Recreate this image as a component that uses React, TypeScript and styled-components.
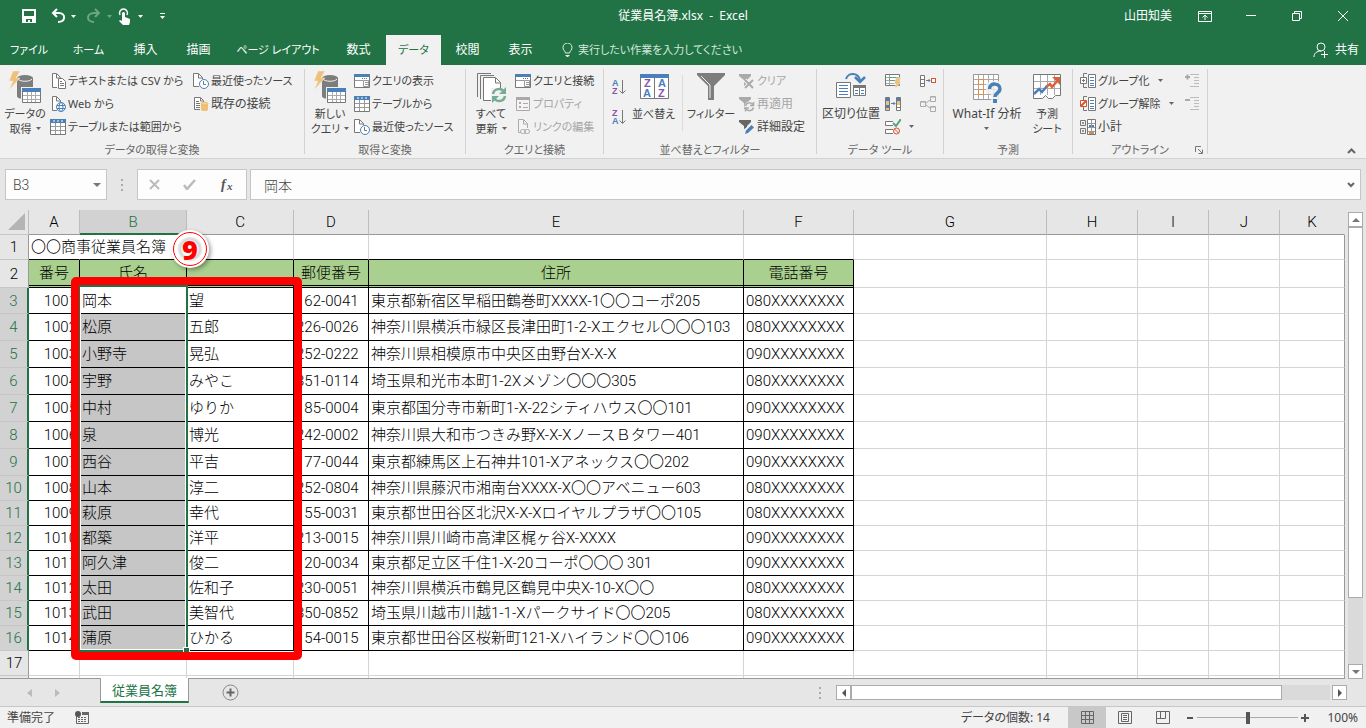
import React from "react";
import styled, { createGlobalStyle, css } from "styled-components";

const GREEN = "#217346";
const UI = `"Noto Sans", "Noto Sans CJK JP", sans-serif`;
const SHEET = `Roboto, "Noto Sans CJK JP", sans-serif`;

const Global = createGlobalStyle`
  * { box-sizing: border-box; }
  body { margin: 0; background: #e6e6e6; }
  button, input { font: inherit; color: inherit; }
  button { border: 0; padding: 0; background: none; cursor: default; white-space: nowrap; }
  svg { display: block; flex: none; }
`;

const Page = styled.div`
  display: flex;
  flex-direction: column;
  height: 100vh;
  overflow: hidden;
  font: 12px/16px ${UI};
  font-feature-settings: "palt";
  color: #444;
`;

/* ---------- title bar ---------- */
const TitleBar = styled.header`
  display: grid;
  grid-template-columns: 1fr auto 1fr;
  align-items: center;
  height: 32px;
  background: ${GREEN};
  color: #fff;
`;
const QuickAccess = styled.div`
  display: flex;
  align-items: center;
  padding-left: 22px;
`;
const QuickButton = styled.button<{ $gap?: number; $dim?: boolean }>`
  margin-right: ${(p) => p.$gap ?? 6}px;
  opacity: ${(p) => (p.$dim ? 0.35 : 1)};
`;
const Title = styled.h1`
  margin: 0;
  font-size: 12px;
  font-weight: 400;
  line-height: 16px;
  white-space: pre;
`;
const WindowTools = styled.div`
  display: flex;
  align-items: center;
  justify-content: flex-end;
`;
const UserName = styled.span`
  margin-right: 10px;
`;
const WindowButton = styled.button`
  display: flex;
  align-items: center;
  justify-content: center;
  width: 46px;
  height: 32px;
`;

/* ---------- tabs ---------- */
const TabBar = styled.nav`
  display: flex;
  align-items: flex-end;
  height: 33px;
  background: ${GREEN};
  color: #fff;
`;
const RibbonTab = styled.button<{ $w: number; $kana?: boolean; $active?: boolean }>`
  width: ${(p) => p.$w}px;
  height: 30px;
  font-size: ${(p) => (p.$kana ? 11 : 12)}px;
  ${(p) =>
    p.$active &&
    css`
      background: #f1f1f1;
      color: ${GREEN};
    `}
`;
const TellMe = styled.label`
  display: flex;
  align-items: center;
  gap: 5px;
  flex: 1;
  height: 30px;
  padding-left: 15px;
  font-size: 11px;
`;
const TellInput = styled.input`
  width: 200px;
  border: 0;
  padding: 0;
  background: none;
  outline: 0;
  &::placeholder { color: #d5e6dc; opacity: 1; }
`;
const Share = styled.button`
  display: flex;
  align-items: center;
  gap: 6px;
  height: 30px;
  padding-right: 7px;
`;

/* ---------- ribbon ---------- */
const Ribbon = styled.section`
  display: flex;
  height: 94px;
  padding: 4px 0;
  background: #f1f1f1;
  border-bottom: 1px solid #d2d2d2;
  font-size: 11px;
`;
const Group = styled.div<{ $w: number }>`
  position: relative;
  width: ${(p) => p.$w}px;
  height: 85px;
  border-right: 1px solid #d2d2d2;
`;
const GroupBody = styled.div<{ $pad?: number }>`
  display: flex;
  height: 69px;
  padding-left: ${(p) => p.$pad ?? 5}px;
`;
const GroupLabel = styled.div`
  height: 16px;
  line-height: 24px;
  text-align: center;
  color: #666;
`;
const Launcher = styled.button`
  position: absolute;
  right: 4px;
  bottom: 0;
`;
const Large = styled.button<{ $w: number; $roomy?: boolean }>`
  display: flex;
  flex-direction: column;
  align-items: center;
  gap: 3px;
  width: ${(p) => p.$w}px;
  height: 69px;
  padding-top: 2px;
  line-height: 15px;
  font-size: ${(p) => (p.$roomy ? 12 : 11)}px;
`;
const Line = styled.span`
  display: flex;
  align-items: center;
  justify-content: center;
  gap: 4px;
  height: 15px;
`;
const LargeText = styled.span`
  display: block;
`;
const Stack = styled.div<{ $w?: number; $ml?: number }>`
  display: flex;
  flex-direction: column;
  width: ${(p) => (p.$w ? p.$w + "px" : "auto")};
  margin-left: ${(p) => p.$ml ?? 0}px;
`;
const Small = styled.button<{ $disabled?: boolean; $roomy?: boolean }>`
  display: flex;
  align-items: center;
  gap: 2px;
  height: 23px;
  font-size: ${(p) => (p.$roomy ? 12 : 11)}px;
  color: ${(p) => (p.$disabled ? "#a6a6a6" : "#444")};
`;
const ArrowSlot = styled.span`
  margin-left: 6px;
`;
const Divider = styled.span`
  width: 1px;
  height: 56px;
  margin: 6px 5px 0 8px;
  background: #dcdcdc;
`;
const SortStack = styled.div`
  display: flex;
  flex-direction: column;
  gap: 10px;
  width: 22px;
  padding-top: 8px;
`;
const CollapseSlot = styled.div`
  display: flex;
  flex: 1;
  align-items: flex-end;
  justify-content: flex-end;
  padding-right: 10px;
`;

/* ---------- formula bar ---------- */
const FormulaRow = styled.div`
  display: flex;
  height: 51px;
  padding: 10px 5px;
  font: 300 14px/20px ${SHEET};
  font-feature-settings: normal;
`;
const Box = styled.div<{ $w?: number; $ml?: number }>`
  display: flex;
  align-items: center;
  justify-content: space-around;
  flex: ${(p) => (p.$w ? `0 0 ${p.$w}px` : "1")};
  min-width: 0;
  margin-left: ${(p) => p.$ml ?? 0}px;
  height: 31px;
  border: 1px solid #c6c6c6;
  background: #fdfdfd;
`;
const BoxInput = styled.input<{ $pad: number }>`
  flex: 1;
  width: 0;
  min-width: 0;
  height: 29px;
  border: 0;
  outline: 0;
  background: none;
  padding: 0 0 0 ${(p) => p.$pad}px;
`;
const BoxButton = styled.button`
  padding: 0 5px;
`;
const Dots = styled.div`
  display: flex;
  flex: 0 0 30px;
  align-items: center;
  justify-content: center;
`;

/* ---------- sheet ---------- */
const SheetRow = styled.main`
  display: flex;
  flex: 1;
  min-height: 0;
`;
const Pane = styled.div`
  position: relative;
  flex: 1;
  min-width: 0;
  overflow: hidden;
  border-bottom: 1px solid #999;
`;
const Grid = styled.table`
  width: 100%;
  table-layout: fixed;
  border-spacing: 0;
  background: #fff;
  font: 300 15px/20px ${SHEET};
  font-feature-settings: normal;
  color: #000;
`;
const HeadRow = styled.tr`
  height: 25px;
`;
const ColHead = styled.th<{ $on?: boolean }>`
  padding: 0;
  font-weight: 300;
  border-right: 1px solid #bdbdbd;
  border-bottom: 1px solid #999;
  background: #e6e6e6;
  ${(p) =>
    p.$on &&
    css`
      background: #d2d2d2;
      color: ${GREEN};
      border-bottom: 2px solid ${GREEN};
    `}
  &:last-child { border-right-color: transparent; }
`;
const Corner = styled.th`
  padding: 0 3px 2px 0;
  border-right: 1px solid #bdbdbd;
  border-bottom: 1px solid #c6c6c6;
  background: #e6e6e6;
  svg { margin-left: auto; }
`;
const Row = styled.tr<{ $h: number }>`
  height: ${(p) => p.$h}px;
`;
const RowHead = styled.th<{ $on?: boolean }>`
  padding: 0;
  font-weight: 300;
  border-right: 1px solid #999;
  border-bottom: 1px solid #c6c6c6;
  background: #e6e6e6;
  ${(p) =>
    p.$on &&
    css`
      background: #d2d2d2;
      color: ${GREEN};
      border-right: 2px solid ${GREEN};
    `}
`;
type CellKind = "plain" | "title" | "top" | "head" | "data" | "picked";
const Cell = styled.td<{ $kind?: CellKind; $align?: string }>`
  padding: 0 2px;
  white-space: nowrap;
  text-align: ${(p) => p.$align ?? "left"};
  border-right: 1px solid #d4d4d4;
  border-bottom: 1px solid #d4d4d4;
  ${(p) =>
    (p.$kind === "top" || p.$kind === "title") &&
    css`
      border-bottom-color: #000;
    `}
  ${(p) =>
    p.$kind === "title" &&
    css`
      border-right-color: transparent;
    `}
  ${(p) =>
    p.$kind === "head" &&
    css`
      background: #a9d08e;
      border-right-color: #000;
      border-bottom: 3px double #000;
    `}
  ${(p) =>
    (p.$kind === "data" || p.$kind === "picked") &&
    css`
      border-right-color: #000;
      border-bottom-color: #000;
    `}
  ${(p) =>
    p.$kind === "picked" &&
    css`
      background: #c6c6c6;
    `}
  &:last-child { border-right-color: #999; }
`;
/* Outline of the selected range B3:B16 with its fill handle */
const Selection = styled.div`
  position: absolute;
  left: 78px;
  top: 75px;
  width: 110px;
  height: 367px;
  border: 2px solid ${GREEN};
  box-shadow: inset 0 0 0 1px #fff;
  &::after {
    content: "";
    position: absolute;
    right: -3px;
    bottom: -3px;
    width: 5px;
    height: 5px;
    background: ${GREEN};
    outline: 1px solid #fff;
  }
`;
const Callout = styled.div`
  position: absolute;
  left: 71px;
  top: 67px;
  width: 231px;
  height: 383px;
  border: 8px solid #f00;
  border-radius: 5px;
`;
const Badge = styled.div`
  position: absolute;
  left: 171px;
  top: 20px;
  width: 38px;
  height: 38px;
  padding: 2px;
  border-radius: 50%;
  background: #fff;
  box-shadow: 2px 2px 4px rgba(0, 0, 0, 0.35);
`;
const BadgeRing = styled.div`
  display: flex;
  align-items: center;
  justify-content: center;
  width: 34px;
  height: 34px;
  border: 1px solid #f00;
  border-radius: 50%;
  background: radial-gradient(circle, #fff 7px, #d4d4d4 10px, #fff 13px);
  font: 900 27px/27px "Noto Sans", sans-serif;
  color: #f00;
`;

const VScroll = styled.div`
  display: flex;
  flex-direction: column;
  flex: 0 0 21px;
  padding: 2px 3px 0;
`;
const ScrollButton = styled.button`
  display: flex;
  align-items: center;
  justify-content: center;
  flex: 0 0 15px;
  width: 15px;
  height: 15px;
  border: 1px solid #ababab;
  background: #fff;
`;
const VTrack = styled.div`
  flex: 1;
  background: #dadada;
`;
const VThumb = styled.div`
  height: 85%;
  border: 1px solid #ababab;
  background: #fff;
`;

/* ---------- sheet tabs ---------- */
const SheetTabs = styled.div`
  display: flex;
  align-items: center;
  height: 27px;
  font-size: 13px;
`;
const NavArrows = styled.div`
  display: flex;
  gap: 23px;
  width: 100px;
  padding-left: 27px;
`;
const SheetTab = styled.button`
  align-self: flex-start;
  width: 89px;
  height: 25px;
  margin-top: -1px;
  position: relative;
  border: 1px solid #999;
  border-width: 0 1px;
  border-bottom: 2px solid ${GREEN};
  background: #fff;
  color: ${GREEN};
`;
const AddSheet = styled.button`
  margin-left: 33px;
`;
const ScrollArea = styled.div`
  display: flex;
  align-items: center;
  gap: 15px;
  margin-left: auto;
`;
const HScroll = styled.div`
  display: flex;
  width: 511px;
  margin-right: 19px;
`;
const HTrack = styled.div`
  flex: 1;
  height: 15px;
  margin-right: 2px;
  background: #dadada;
`;
const HThumb = styled.div`
  width: 90%;
  height: 15px;
  border: 1px solid #ababab;
  background: #fff;
`;

/* ---------- status bar ---------- */
const StatusBar = styled.footer`
  display: flex;
  align-items: center;
  height: 22px;
  border-top: 1px solid #c6c6c6;
  background: #f1f1f1;
`;
const StatusText = styled.span`
  padding-left: 7px;
  margin-right: 20px;
`;
const Count = styled.span`
  margin: 0 18px 0 auto;
`;
const ViewButton = styled.button<{ $on?: boolean }>`
  display: flex;
  align-items: center;
  justify-content: center;
  width: 38px;
  height: 21px;
  background: ${(p) => (p.$on ? "#c8c8c8" : "none")};
`;
const Zoom = styled.div`
  display: flex;
  align-items: center;
  margin-left: 4px;
`;
const Range = styled.input`
  appearance: none;
  width: 101px;
  height: 13px;
  margin: 0 3px;
  background: linear-gradient(#aaa, #aaa) center / 100% 1px no-repeat;
  &::-webkit-slider-thumb {
    appearance: none;
    width: 4px;
    height: 12px;
    background: #555;
  }
`;
const ZoomValue = styled.span`
  width: 57px;
  padding-right: 8px;
  text-align: right;
`;

/* ---------- icons ---------- */
const BLUE = "#4a80ba";
const GRAY = "#777";

type Kids = { children?: React.ReactNode; w?: number; h?: number };
const Svg = ({ w = 16, h = 16, children }: Kids) => (
  <svg width={w} height={h} viewBox={`0 0 ${w} ${h}`} fill="none" aria-hidden="true">
    {children}
  </svg>
);
const Down = ({ c = "#666" }: { c?: string }) => (
  <Svg w={5} h={3}>
    <path d="M0 0h5L2.500 3z" fill={c} />
  </Svg>
);

const DatabaseIcon = () => (
  <Svg w={32} h={32}>
    <path d="M8 7v18c0 2 3 3 8 3s8-1 8-3V7z" fill="#7d7d7d" />
    <ellipse cx="16" cy="7" rx="8" ry="3" fill="#7d7d7d" />
    <path d="M9 8c2 3 12 3 14 0" stroke="#f1f1f1" />
    <path d="M4 0h7L7 7h4L0 19l4-9H0z" fill="#eec078" stroke="#f1f1f1" strokeWidth=".5" />
    <path d="M12 16h20v16H12z" fill="#f1f1f1" />
    <path d="M13.500 17.500h18v14h-18z" fill="#fff" stroke={GRAY} />
    <path d="M14 24.500h17M14 28.500h17M18.500 21v10M22.500 21v10M26.500 21v10" stroke="#aaa" />
    <path d="M13 17h19v4H13z" fill={BLUE} />
  </Svg>
);
const Sheetlet = ({ c = GRAY }: { c?: string }) => (
  <path d="M10.500 8V4.500l-4-4h-4v14H7M6.500 1v4h4" stroke={c} fill="none" />
);
const TextFileIcon = () => (
  <Svg>
    <path d="M3 1h4l4 4v9H3z" fill="#fff" />
    <Sheetlet />
    <path d="M8.500 5.500h4l3 3v7h-7z" fill="#fff" stroke={GRAY} />
    <path d="M10 8.500h2M10 10.500h4M10 12.500h4" stroke={GRAY} />
  </Svg>
);
const WebIcon = () => (
  <Svg>
    <path d="M3 1h4l4 4v9H3z" fill="#fff" />
    <Sheetlet />
    <circle cx="11" cy="11" r="4.500" fill="#fff" stroke={BLUE} />
    <ellipse cx="11" cy="11" rx="2" ry="4.500" stroke={BLUE} />
    <path d="M7 9.500h8M7 12.500h8" stroke={BLUE} />
  </Svg>
);
const RecentIcon = () => (
  <Svg>
    <path d="M1 1h4l4 4v8H1z" fill="#fff" />
    <path d="M9.500 6V4.500l-4-4h-5v13H6M5.500 1v4h4" stroke={GRAY} />
    <circle cx="11" cy="11" r="4.500" fill="#fff" stroke={BLUE} />
    <path d="M10.500 8v3.500H13" stroke={GRAY} />
  </Svg>
);
const TableIcon = () => (
  <Svg>
    <path d="M.5.500h15v15H.5z" fill="#fff" stroke={GRAY} />
    <path d="M1 7.500h14M1 11.500h14M5.500 4v11M10.500 4v11" stroke="#999" />
    <path d="M0 0h16v4H0z" fill={BLUE} />
    <path d="M3 2h2M7 2h2M11 2h2" stroke="#fff" />
  </Svg>
);
const ExistingIcon = () => (
  <Svg>
    <path d="M1.500 1.500h6l3 3v9h-9z" fill="#fff" stroke={GRAY} />
    <path d="M7.500 2v3h3M3 5.500h3M3 7.500h5M3 9.500h4M3 11.500h4" stroke={GRAY} />
    <path d="M7 6h9v9H7z" fill="#f1f1f1" />
    <path d="M8 7.500v6c0 2 7 2 7 0v-6z" fill="#eec078" />
    <ellipse cx="11.500" cy="7.500" rx="3.500" ry="1.500" fill="#f4d298" stroke="#e0a850" strokeWidth=".5" />
  </Svg>
);
const QueryPaneIcon = () => (
  <Svg>
    <path d="M.5 1.500h15v13H.5z" fill="#fff" stroke={GRAY} />
    <path d="M0 1h16v3H0z" fill={BLUE} />
    <path d="M1 7.500h8M9.500 7.500v6h5v-6z" stroke="#999" />
    <path d="M11 9.500h3M11 11.500h3" stroke="#999" />
    <path d="M8 5.500h1M10 5.500h1M12 5.500h1" stroke="#777" />
  </Svg>
);
const PropertiesIcon = () => (
  <Svg>
    <path d="M1.500 1.500h13v13h-13z" fill="#f6f2f6" stroke="#aaa" />
    <path d="M1 1h14v3H1z" fill="#aaa" />
    <path d="M4 6h2v2H4zM4 10h2v2H4z" fill="#aaa" />
    <path d="M8 7.500h5M8 11.500h5" stroke="#aaa" />
  </Svg>
);
const LinkFileIcon = () => (
  <Svg>
    <path d="M12.500 9V4.500l-4-4h-5v13H6M8.500 1v4h4" stroke="#aaa" fill="#f6f2f6" />
    <rect x="5.500" y="10.500" width="5" height="4" rx="2" stroke="#aaa" fill="#f1f1f1" />
    <rect x="9.500" y="10.500" width="5" height="4" rx="2" stroke="#aaa" />
  </Svg>
);
const RefreshAllIcon = () => (
  <Svg w={32} h={32}>
    <path d="M2.500 26V2.500H16M5.500 28V4.500H19" stroke={GRAY} />
    <path d="M8.500 6.500h12l5 5v18h-17z" fill="#fff" stroke={GRAY} />
    <path d="M20.500 7v5h5" stroke={GRAY} />
    <path d="M16 17h16v14H16z" fill="#f1f1f1" />
    <path d="M18 23c1-6 8-6 10.500-3M30 25c-1 6-8 6-10.500 3" stroke="#74ad93" strokeWidth="2.500" />
    <path d="M31 16v7h-7zM17 32v-7h7z" fill="#74ad93" />
  </Svg>
);
const Letter = ({ x, y, c, s = 9, t }: { x: number; y: number; c: string; s?: number; t: string }) => (
  <text x={x} y={y} fill={c} fontFamily="Liberation Sans, sans-serif" fontSize={s} fontWeight="700">
    {t}
  </text>
);
const PURPLE = "#8a52b0";
const SortIcon = ({ asc }: { asc?: boolean }) => (
  <Svg w={16} h={20}>
    <Letter x={1} y={9} c={asc ? BLUE : PURPLE} t={asc ? "A" : "Z"} />
    <Letter x={1} y={17} c={asc ? PURPLE : BLUE} t={asc ? "Z" : "A"} />
    <path d="M11.500 3v13M8.500 13.500l3 3 3-3" stroke={GRAY} />
  </Svg>
);
const SortDialogIcon = () => (
  <Svg w={32} h={32}>
    <path d="M2.500 3.500h28v24h-28z" fill="#fff" stroke={GRAY} />
    <path d="M16.500 7v20" stroke={GRAY} />
    <path d="M2 3h29v4H2z" fill={BLUE} />
    <Letter x={6} y={16} c={PURPLE} s={11} t="Z" />
    <Letter x={5} y={26} c={BLUE} s={11} t="A" />
    <Letter x={20} y={16} c={BLUE} s={11} t="A" />
    <Letter x={20} y={26} c={PURPLE} s={11} t="Z" />
  </Svg>
);
const FilterIcon = () => (
  <Svg w={32} h={32}>
    <path d="M2 2h28v2L19 15v14h-6V15L2 4z" fill="#7d7d7d" />
    <path d="M6 5l9 9v13" stroke="#f1f1f1" />
  </Svg>
);
const SmallFunnel = ({ c }: { c: string }) => <path d="M0 1h12v2L8 7v6H5V7L0 3z" fill={c} />;
const ClearIcon = () => (
  <Svg>
    <SmallFunnel c="#aaa" />
    <path d="M6 7l8 8M14 7l-8 8" stroke="#f1f1f1" strokeWidth="4" />
    <path d="M6 7l8 8M14 7l-8 8" stroke="#aaa" strokeWidth="2" />
  </Svg>
);
const ReapplyIcon = () => (
  <Svg>
    <SmallFunnel c="#aaa" />
    <circle cx="10.500" cy="10.500" r="5" fill="#f1f1f1" />
    <path d="M6.500 10c1-4 6-4 7.500-1M14.500 11.500c-1 4-6 4-7.500 1M14.500 6v3.500H11M6.500 15.500V12H10" stroke="#aaa" strokeWidth="1.500" />
  </Svg>
);
const AdvancedIcon = () => (
  <Svg>
    <SmallFunnel c="#666" />
    <path d="M13 4l4 4-8 8H4v-5z" fill="#f1f1f1" />
    <path d="M12.500 6l2.500 2.500-6 5.500-3 1 1-3.500z" fill={BLUE} />
  </Svg>
);
const SplitIcon = () => (
  <Svg w={32} h={32}>
    <path d="M1.500 11.500h14v15h-14z" fill="#fff" stroke={GRAY} />
    <path d="M4 14.500h9M4 17.500h9M4 20.500h9M4 23.500h9" stroke={BLUE} />
    <path d="M18.500 14.500h12v10h-12z" fill="#fff" stroke={GRAY} />
    <path d="M18 14h13v3H18zM24 17h1v7h-1z" fill={GRAY} />
    <path d="M20 19.500h3M20 22.500h3M26 19.500h3M26 22.500h3" stroke={BLUE} />
    <path d="M11 8c2-7 13-7 14 2" stroke={BLUE} strokeWidth="2" />
    <path d="M20 6l5 5 5-5" stroke={BLUE} strokeWidth="2.500" />
  </Svg>
);
const FlashFillIcon = () => (
  <Svg>
    <path d="M.5 1.500h14v11H.5z" fill="#fff" stroke={GRAY} />
    <path d="M1 4.500h14M1 7.500h14M1 10.500h14M4.500 2v10" stroke="#aaa" />
    <path d="M4.500 4.500h7v3h-7z" stroke="#5aa37c" fill="#fff" />
    <path d="M11 5h5l-2 4h2l-6 7 1-5H9z" fill="#eec078" stroke="#f1f1f1" strokeWidth=".5" />
  </Svg>
);
const DuplicatesIcon = () => (
  <Svg>
    <path d="M.5 1.500h4v13h-4z" fill="#eec078" stroke={GRAY} />
    <path d="M1 2h3v3H1zM1 9h3v3H1z" fill={BLUE} />
    <path d="M11.500 1.500h4v13h-4z" fill="#fff" stroke={GRAY} />
    <path d="M12 2h3v3h-3z" fill={BLUE} />
    <path d="M12 5h3v4h-3z" fill="#eec078" />
    <path d="M12 11.500h3" stroke={GRAY} />
    <path d="M6 7.500h4M8.500 6l1.500 1.500L8.500 9" stroke={BLUE} />
  </Svg>
);
const ValidationIcon = () => (
  <Svg>
    <path d="M8 2.500H.5v4H8M8 10.500H.5v4H8" stroke={GRAY} fill="#fff" />
    <path d="M8 4l3 3 5-7" stroke="#5aa37c" strokeWidth="2" />
    <circle cx="11.500" cy="12" r="3" stroke="#d9532c" fill="#f1f1f1" />
    <path d="M9.500 10l4 4" stroke="#d9532c" />
  </Svg>
);
const ConsolidateIcon = () => (
  <Svg>
    <path d="M.5 2.500h4v11h-4zM1 6.500h3M1 10.500h3" fill="#fff" stroke={GRAY} />
    <path d="M6 7.500h4M8.500 6l1.500 1.500L8.500 9" stroke={BLUE} />
    <path d="M11 5h5v5h-5z" fill="#d9532c" />
    <path d="M12 6h3v3h-3z" fill="#fff" />
  </Svg>
);
const RelationIcon = () => (
  <Svg>
    <path d="M.5 5.500h5v5h-5zM10.500.500h5v5h-5zM10.500 10.500h5v5h-5zM6 7l4-3M6 9l4 3" stroke="#aaa" />
    <path d="M1 6h4M11 1h4M11 11h4" stroke="#aaa" />
  </Svg>
);
const WhatIfIcon = () => (
  <Svg w={32} h={32}>
    <path d="M2.500 3.500h25v25h-25z" fill="#fff" stroke="#999" />
    <path d="M3 8.500h24M3 13.500h24M3 18.500h24M3 23.500h24M7.500 4v24M12.500 4v24M17.500 4v24M22.500 4v24" stroke="#aaa" />
    <path d="M7.500 8.500h5v5h-5zM7.500 18.500h5v5h-5z" fill="#fff" stroke="#e08a3c" />
    <path d="M15 13l4-3h11v22H20v-9h-5z" fill="#f1f1f1" opacity=".8" />
    <path d="M18.500 18c0-7 11-6 10.500 0 0 4-5 3.500-5 8" stroke={BLUE} strokeWidth="3.500" />
    <path d="M22 28h4v4h-4z" fill={BLUE} />
  </Svg>
);
const ForecastIcon = () => (
  <Svg w={32} h={32}>
    <path d="M2.500 3.500h27v21h-5l-3 3h-4l-3-3-3 3h-9z" fill="#fff" stroke={GRAY} />
    <path d="M3 10.500h26M3 17.500h26M9.500 4v20M16.500 4v20M23.500 4v20" stroke="#aaa" />
    <path d="M3 23l5-5 3 3 5-6" stroke={BLUE} strokeWidth="2.500" />
    <path d="M15 16l4-3 2 3 7-8" stroke="#d9623c" strokeWidth="2.500" />
    <path d="M21 6h8v8z" fill="#d9623c" />
  </Svg>
);
const GroupIcon = ({ cut }: { cut?: boolean }) => (
  <Svg>
    <path d="M7 .5H3.500V4M3.500 10v4.500H7" stroke={GRAY} />
    <path d="M8.500 1.500h7v13h-7z" fill="#fff" stroke={GRAY} />
    <path d="M10 4.500h4M10 7.500h4M10 10.500h4M10 12.500h4" stroke={BLUE} />
    <path d="M.5 4.500h6v6h-6z" fill="#fff" stroke={cut ? "#d9532c" : GRAY} />
    {cut ? <path d="M1 10l5-5" stroke="#d9532c" strokeWidth="2" /> : <path d="M2 7.500h3M3.500 6v3" stroke={GRAY} />}
  </Svg>
);
const SubtotalIcon = () => (
  <Svg>
    <path d="M.5 1.500h5v5h-5zM.5 9.500h5v5h-5zM2 4h2M3 3v2M2 12h2M3 11v2" stroke={GRAY} />
    <path d="M7.500.500h8v15h-8z" fill="#fff" stroke={GRAY} />
    <path d="M8 4.500h7M8 8.500h7M8 12.500h7M11.500 1v14" stroke="#999" />
    <path d="M9 6h2v2H9zM12 6h2v2h-2z" fill={BLUE} />
    <path d="M9 13h2v2H9zM12 13h2v2h-2z" fill="#e08a3c" />
  </Svg>
);
const DetailIcon = ({ plus }: { plus?: boolean }) => (
  <Svg>
    <path d={plus ? "M1 4h5M3.500 1.500v5" : "M1 4h5"} stroke="#aaa" strokeWidth="2" />
    <path d="M6 1.500h9M10 4.500h5M10 7.500h5M10 10.500h5M6 13.500h9" stroke="#bbb" />
  </Svg>
);

/* ---------- data ---------- */
const columns: [string, number?][] = [
  ["A", 51], ["B", 107], ["C", 107], ["D", 75], ["E", 375], ["F", 110],
  ["G", 193], ["H", 91], ["I", 71], ["J", 71], ["K"],
];
const headings = ["番号", "氏名", "", "郵便番号", "住所", "電話番号"];
const people: string[][] = [
  ["1001", "岡本", "望", "162-0041", "東京都新宿区早稲田鶴巻町XXXX-1〇〇コーポ205", "080XXXXXXXX"],
  ["1002", "松原", "五郎", "226-0026", "神奈川県横浜市緑区長津田町1-2-Xエクセル〇〇〇103", "080XXXXXXXX"],
  ["1003", "小野寺", "晃弘", "252-0222", "神奈川県相模原市中央区由野台X-X-X", "090XXXXXXXX"],
  ["1004", "宇野", "みやこ", "351-0114", "埼玉県和光市本町1-2Xメゾン〇〇〇305", "080XXXXXXXX"],
  ["1005", "中村", "ゆりか", "185-0004", "東京都国分寺市新町1-X-22シティハウス〇〇101", "090XXXXXXXX"],
  ["1006", "泉", "博光", "242-0002", "神奈川県大和市つきみ野X-X-XノースＢタワー401", "090XXXXXXXX"],
  ["1007", "西谷", "平吉", "177-0044", "東京都練馬区上石神井101-Xアネックス〇〇202", "090XXXXXXXX"],
  ["1008", "山本", "淳二", "252-0804", "神奈川県藤沢市湘南台XXXX-X〇〇アベニュー603", "080XXXXXXXX"],
  ["1009", "萩原", "幸代", "155-0031", "東京都世田谷区北沢X-X-Xロイヤルプラザ〇〇105", "080XXXXXXXX"],
  ["1010", "都築", "洋平", "213-0015", "神奈川県川崎市高津区梶ヶ谷X-XXXX", "090XXXXXXXX"],
  ["1011", "阿久津", "俊二", "120-0034", "東京都足立区千住1-X-20コーポ〇〇〇 301", "090XXXXXXXX"],
  ["1012", "太田", "佐和子", "230-0051", "神奈川県横浜市鶴見区鶴見中央X-10-X〇〇", "080XXXXXXXX"],
  ["1013", "武田", "美智代", "350-0852", "埼玉県川越市川越1-1-Xパークサイド〇〇205", "080XXXXXXXX"],
  ["1014", "蒲原", "ひかる", "154-0015", "東京都世田谷区桜新町121-Xハイランド〇〇106", "090XXXXXXXX"],
];
const tabs: { name: string; w: number; kana?: boolean }[] = [
  { name: "ファイル", w: 58, kana: true },
  { name: "ホーム", w: 61, kana: true },
  { name: "挿入", w: 53 },
  { name: "描画", w: 53 },
  { name: "ページ レイアウト", w: 106, kana: true },
  { name: "数式", w: 55 },
  { name: "データ", w: 55, kana: true },
  { name: "校閲", w: 53 },
  { name: "表示", w: 53 },
];
const Blanks = ({ n }: { n: number }) => (
  <>
    {Array.from({ length: n }, (_, i) => (
      <Cell key={i} />
    ))}
  </>
);
const rowHeight = (i: number) => (i === 0 ? 26 : i < 7 ? 27 : 25);

export default function App() {
  return (
    <Page>
      <Global />
      <TitleBar>
        <QuickAccess>
          <QuickButton $gap={14} aria-label="上書き保存">
            <Svg w={14} h={14}>
              <path d="M0 0h14v14H0z" fill="#fff" />
              <path d="M2 2h10v5H2zM4 10h6v3H8v-2H6v2H4z" fill={GREEN} />
            </Svg>
          </QuickButton>
          <QuickButton $gap={5} aria-label="元に戻す">
            <Svg>
              <path d="M7 1L3 5l4 4M3 5h6c7 0 7 9-1 9" stroke="#fff" strokeWidth="2" />
            </Svg>
          </QuickButton>
          <QuickButton $gap={10} aria-label="元に戻す一覧"><Down c="#fff" /></QuickButton>
          <QuickButton $gap={5} $dim aria-label="やり直し">
            <Svg>
              <path d="M9 1l4 4-4 4M13 5H8C0 5 0 14 8 14" stroke="#fff" strokeWidth="2" />
            </Svg>
          </QuickButton>
          <QuickButton $dim aria-label="やり直し一覧"><Down c="#fff" /></QuickButton>
          <QuickButton aria-label="タッチ モード">
            <Svg w={14} h={17}>
              <path d="M2 7a4 4 0 1 1 7 0" stroke="#fff" strokeWidth="1.500" />
              <path d="M4 5q1.500-2 3 0v4l5 2v3l-1 3H5l-4-4 1-1 2 1z" fill="#fff" />
            </Svg>
          </QuickButton>
          <QuickButton $gap={16} aria-label="モードの選択"><Down c="#fff" /></QuickButton>
          <QuickButton aria-label="クイック アクセスのカスタマイズ">
            <Svg w={7} h={6}>
              <path d="M1 .5h5" stroke="#fff" />
              <path d="M1 3h5L3.500 6z" fill="#fff" />
            </Svg>
          </QuickButton>
        </QuickAccess>
        <Title>{"従業員名簿.xlsx  -  Excel"}</Title>
        <WindowTools>
          <UserName>山田知美</UserName>
          <WindowButton aria-label="リボンの表示オプション">
            <Svg w={14} h={11}>
              <path d="M.5.500h13v10H.5zM1 2.500h12M7 9V4.500M4.500 6.500L7 4l2.500 2.500" stroke="#fff" />
            </Svg>
          </WindowButton>
          <WindowButton aria-label="最小化">
            <Svg w={10} h={2}><path d="M0 .5h10" stroke="#fff" /></Svg>
          </WindowButton>
          <WindowButton aria-label="元のサイズに戻す">
            <Svg w={10} h={10}><path d="M.5 2.500h7v7h-7zM2.500 2V.5h7v7H8" stroke="#fff" /></Svg>
          </WindowButton>
          <WindowButton aria-label="閉じる">
            <Svg w={10} h={10}><path d="M0 0l10 10M10 0L0 10" stroke="#fff" /></Svg>
          </WindowButton>
        </WindowTools>
      </TitleBar>

      <TabBar>
        {tabs.map(({ name, w, kana }) => (
          <RibbonTab key={name} $w={w} $kana={kana} $active={name === "データ"}>{name}</RibbonTab>
        ))}
        <TellMe>
          <Svg w={11} h={14}>
            <path d="M3.500 10C3 8 1 7 1 4.500a4.500 4.500 0 0 1 9 0C10 7 8 8 7.500 10zM3.500 12.500h4M4.500 13.500h2" stroke="#e6f0ea" />
          </Svg>
          <TellInput placeholder="実行したい作業を入力してください" aria-label="操作アシスト" />
        </TellMe>
        <Share>
          <Svg>
            <circle cx="8" cy="5" r="4" stroke="#fff" />
            <path d="M1 15c0-4 3-6 7-6M8 12.500h7M11.500 9v7" stroke="#fff" />
          </Svg>
          共有
        </Share>
      </TabBar>

      <Ribbon>
        <Group $w={305}>
          <GroupBody>
            <Large $w={40}>
              <DatabaseIcon />
              <LargeText><Line>データの</Line><Line>取得<Down /></Line></LargeText>
            </Large>
            <Stack $w={143} $ml={5}>
              <Small><TextFileIcon />テキストまたは CSV から</Small>
              <Small><WebIcon />Web から</Small>
              <Small><TableIcon />テーブルまたは範囲から</Small>
            </Stack>
            <Stack>
              <Small><RecentIcon />最近使ったソース</Small>
              <Small $roomy><ExistingIcon />既存の接続</Small>
            </Stack>
          </GroupBody>
          <GroupLabel>データの取得と変換</GroupLabel>
        </Group>

        <Group $w={161}>
          <GroupBody>
            <Large $w={40}>
              <DatabaseIcon />
              <LargeText><Line>新しい</Line><Line>クエリ<Down /></Line></LargeText>
            </Large>
            <Stack $ml={4}>
              <Small><QueryPaneIcon />クエリの表示</Small>
              <Small><TableIcon />テーブルから</Small>
              <Small><RecentIcon />最近使ったソース</Small>
            </Stack>
          </GroupBody>
          <GroupLabel>取得と変換</GroupLabel>
        </Group>

        <Group $w={138}>
          <GroupBody>
            <Large $w={40}>
              <RefreshAllIcon />
              <LargeText><Line>すべて</Line><Line>更新<Down /></Line></LargeText>
            </Large>
            <Stack $ml={4}>
              <Small><QueryPaneIcon />クエリと接続</Small>
              <Small $disabled><PropertiesIcon />プロパティ</Small>
              <Small $disabled><LinkFileIcon />リンクの編集</Small>
            </Stack>
          </GroupBody>
          <GroupLabel>クエリと接続</GroupLabel>
        </Group>

        <Group $w={213}>
          <GroupBody $pad={7}>
            <SortStack>
              <button aria-label="昇順"><SortIcon asc /></button>
              <button aria-label="降順"><SortIcon /></button>
            </SortStack>
            <Large $w={41}>
              <SortDialogIcon />
              <Line>並べ替え</Line>
            </Large>
            <Divider />
            <Large $w={46}>
              <FilterIcon />
              <Line>フィルター</Line>
            </Large>
            <Stack $ml={5}>
              <Small $disabled><ClearIcon />クリア</Small>
              <Small $disabled $roomy><ReapplyIcon />再適用</Small>
              <Small $roomy><AdvancedIcon />詳細設定</Small>
            </Stack>
          </GroupBody>
          <GroupLabel>並べ替えとフィルター</GroupLabel>
        </Group>

        <Group $w={127}>
          <GroupBody>
            <Large $w={58} $roomy>
              <SplitIcon />
              <Line>区切り位置</Line>
            </Large>
            <Stack $ml={5} $w={35}>
              <Small aria-label="フラッシュ フィル"><FlashFillIcon /></Small>
              <Small aria-label="重複の削除"><DuplicatesIcon /></Small>
              <Small aria-label="データの入力規則"><ValidationIcon /><ArrowSlot><Down /></ArrowSlot></Small>
            </Stack>
            <Stack>
              <Small aria-label="統合"><ConsolidateIcon /></Small>
              <Small aria-label="リレーションシップ"><RelationIcon /></Small>
            </Stack>
          </GroupBody>
          <GroupLabel>データ ツール</GroupLabel>
        </Group>

        <Group $w={129}>
          <GroupBody>
            <Large $w={76} $roomy>
              <WhatIfIcon />
              <LargeText><Line>What-If 分析</Line><Line><Down /></Line></LargeText>
            </Large>
            <Large $w={44}>
              <ForecastIcon />
              <LargeText><Line>予測</Line><Line>シート</Line></LargeText>
            </Large>
          </GroupBody>
          <GroupLabel>予測</GroupLabel>
        </Group>

        <Group $w={135}>
          <GroupBody $pad={7}>
            <Stack $w={104}>
              <Small><GroupIcon />グループ化<ArrowSlot><Down /></ArrowSlot></Small>
              <Small><GroupIcon cut />グループ解除<ArrowSlot><Down /></ArrowSlot></Small>
              <Small $roomy><SubtotalIcon />小計</Small>
            </Stack>
            <Stack>
              <Small aria-label="詳細データの表示"><DetailIcon plus /></Small>
              <Small aria-label="詳細を表示しない"><DetailIcon /></Small>
            </Stack>
          </GroupBody>
          <GroupLabel>アウトライン</GroupLabel>
          <Launcher aria-label="アウトラインの設定">
            <Svg w={8} h={8}>
              <path d="M.5 6V.5H6M3 3l4 4M7.500 3.500v4h-4" stroke="#777" />
            </Svg>
          </Launcher>
        </Group>
        <CollapseSlot>
          <button aria-label="リボンを折りたたむ">
            <Svg w={9} h={6}><path d="M1 5l3.500-3.500L8 5" stroke="#666" strokeWidth="2" /></Svg>
          </button>
        </CollapseSlot>
      </Ribbon>

      <FormulaRow>
        <Box $w={102}>
          <BoxInput $pad={7} defaultValue="B3" aria-label="名前ボックス" />
          <BoxButton aria-label="名前の一覧">
            <Svg w={8} h={4}><path d="M0 0h8L4 4z" fill="#777" /></Svg>
          </BoxButton>
        </Box>
        <Dots>
          <Svg w={2} h={12}><path d="M0 1h2M0 6h2M0 11h2" stroke="#aaa" strokeWidth="2" /></Svg>
        </Dots>
        <Box $w={110}>
          <button aria-label="キャンセル">
            <Svg w={11} h={11}><path d="M1 1l9 9M10 1l-9 9" stroke="#bbb" strokeWidth="2" /></Svg>
          </button>
          <button aria-label="入力">
            <Svg w={13} h={11}><path d="M1 6l3 4 8-9" stroke="#bbb" strokeWidth="2.500" /></Svg>
          </button>
          <button aria-label="関数の挿入">
            <Svg w={16} h={18}>
              <text x="2" y="13" fill="#555" fontFamily="Liberation Serif, serif" fontSize="14" fontStyle="italic" fontWeight="700">f</text>
              <text x="8" y="14" fill="#555" fontFamily="Liberation Serif, serif" fontSize="11" fontStyle="italic" fontWeight="700">x</text>
            </Svg>
          </button>
        </Box>
        <Box $ml={3}>
          <BoxInput $pad={13} defaultValue="岡本" aria-label="数式バー" />
          <BoxButton aria-label="数式バーの展開">
            <Svg w={8} h={6}><path d="M1 1l3 3 3-3" stroke="#666" strokeWidth="2" /></Svg>
          </BoxButton>
        </Box>
      </FormulaRow>

      <SheetRow>
        <Pane>
          <Grid>
            <colgroup>
              <col width={29} />
              {columns.map(([c, w]) => <col key={c} width={w} />)}
            </colgroup>
            <thead>
              <HeadRow>
                <Corner>
                  <Svg w={17} h={17}><path d="M17 0v17H0z" fill="#b4b4b4" /></Svg>
                </Corner>
                {columns.map(([c]) => <ColHead key={c} scope="col" $on={c === "B"}>{c}</ColHead>)}
              </HeadRow>
            </thead>
            <tbody>
              <Row $h={25}>
                <RowHead scope="row">1</RowHead>
                <Cell $kind="title">〇〇商事従業員名簿</Cell>
                {headings.slice(1).map((_, i) => <Cell key={i} $kind="top" />)}
                <Blanks n={5} />
              </Row>
              <Row $h={28}>
                <RowHead scope="row">2</RowHead>
                {headings.map((h, i) => <Cell key={i} $kind="head" $align="center">{h}</Cell>)}
                <Blanks n={5} />
              </Row>
              {people.map((p, i) => (
                <Row key={p[0]} $h={rowHeight(i)}>
                  <RowHead scope="row" $on>{i + 3}</RowHead>
                  {p.map((v, j) => (
                    <Cell key={j} $kind={j === 1 && i > 0 ? "picked" : "data"} $align={j === 0 ? "right" : "left"}>{v}</Cell>
                  ))}
                  <Blanks n={5} />
                </Row>
              ))}
              <Row $h={25}>
                <RowHead scope="row">17</RowHead>
                <Blanks n={11} />
              </Row>
              <Row $h={25}>
                <RowHead />
                <Blanks n={11} />
              </Row>
            </tbody>
          </Grid>
          <Selection />
          <Callout />
          <Badge><BadgeRing>9</BadgeRing></Badge>
        </Pane>
        <VScroll>
          <ScrollButton aria-label="上へスクロール">
            <Svg w={8} h={4}><path d="M4 0l4 4H0z" fill="#777" /></Svg>
          </ScrollButton>
          <VTrack><VThumb /></VTrack>
          <ScrollButton aria-label="下へスクロール">
            <Svg w={8} h={4}><path d="M0 0h8L4 4z" fill="#777" /></Svg>
          </ScrollButton>
        </VScroll>
      </SheetRow>

      <SheetTabs>
        <NavArrows>
          <button aria-label="前のシート"><Svg w={5} h={8}><path d="M5 0v8L0 4z" fill="#bbb" /></Svg></button>
          <button aria-label="次のシート"><Svg w={5} h={8}><path d="M0 0v8l5-4z" fill="#bbb" /></Svg></button>
        </NavArrows>
        <SheetTab>従業員名簿</SheetTab>
        <AddSheet aria-label="新しいシート">
          <Svg w={17} h={17}>
            <circle cx="8.500" cy="8.500" r="7.500" stroke="#888" />
            <path d="M8.500 4.500v8M4.500 8.500h8" stroke="#666" strokeWidth="2" />
          </Svg>
        </AddSheet>
        <ScrollArea>
          <Svg w={2} h={12}><path d="M0 1h2M0 6h2M0 11h2" stroke="#aaa" strokeWidth="2" /></Svg>
          <HScroll>
            <ScrollButton aria-label="左へスクロール"><Svg w={4} h={8}><path d="M4 0v8L0 4z" fill="#555" /></Svg></ScrollButton>
            <HTrack><HThumb /></HTrack>
            <ScrollButton aria-label="右へスクロール"><Svg w={4} h={8}><path d="M0 0v8l4-4z" fill="#555" /></Svg></ScrollButton>
          </HScroll>
        </ScrollArea>
      </SheetTabs>

      <StatusBar>
        <StatusText>準備完了</StatusText>
        <button aria-label="マクロの記録">
          <Svg w={14} h={13}>
            <path d="M1.500 5v7.500h12v-11H7" stroke="#666" />
            <path d="M7 1h7v3H7z" fill="#666" />
            <circle cx="3" cy="3" r="3" fill="#555" />
            <path d="M3 6.500h9M3 8.500h9M3 10.500h9" stroke="#666" strokeDasharray="2 1" />
          </Svg>
        </button>
        <Count>データの個数: 14</Count>
        <ViewButton $on aria-label="標準">
          <Svg w={13} h={13}><path d="M.5.500h12v12H.5zM4.500 0v13M8.500 0v13M0 4.500h13M0 8.500h13" stroke="#666" /></Svg>
        </ViewButton>
        <ViewButton aria-label="ページ レイアウト表示">
          <Svg w={14} h={13}><path d="M.5.500h13v12H.5zM3.500 2.500h7v8h-7zM5 4.500h4M5 6.500h4M5 8.500h4" stroke="#666" /></Svg>
        </ViewButton>
        <ViewButton aria-label="改ページ プレビュー">
          <Svg w={14} h={13}><path d="M.5.500h13v12H.5zM4.500 1v6M9.500 1v6.500H1" stroke="#666" /></Svg>
        </ViewButton>
        <Zoom>
          <button aria-label="縮小"><Svg w={8} h={8}><path d="M1 4h6" stroke="#555" strokeWidth="2" /></Svg></button>
          <Range type="range" min={0} max={100} defaultValue={50} aria-label="ズーム" />
          <button aria-label="拡大"><Svg w={8} h={8}><path d="M0 4h8M4 0v8" stroke="#555" strokeWidth="2" /></Svg></button>
          <ZoomValue>100%</ZoomValue>
        </Zoom>
      </StatusBar>
    </Page>
  );
}
